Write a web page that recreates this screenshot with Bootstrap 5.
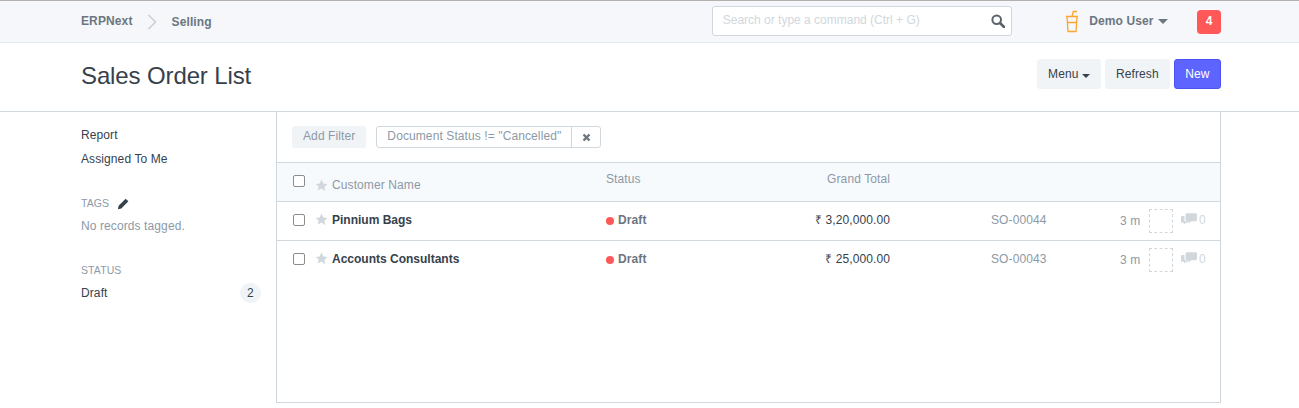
<!DOCTYPE html>
<html lang="en">
<head>
  <meta charset="UTF-8" />
  <title>Sales Order List</title>
  <link href="https://cdn.jsdelivr.net/npm/bootstrap@5.3.0/dist/css/bootstrap.min.css" rel="stylesheet" />
  <style>
    body {
      font-family: "Liberation Sans", Arial, sans-serif;
      font-size: 12px;
      line-height: 1.42857;
      letter-spacing: .1px;
      color: #36414c;
      background: #fff;
      overflow: hidden;
      height: 408px;
    }
    .wrap { width: 1140px; margin-left: 81px; }

    .topbar { height: 43px; background: #f5f7fa; border-top: 1px solid #b3b0ad; border-bottom: 1px solid #e6e9ec; }
    .topbar .wrap { height: 41px; }
    .crumb { font-weight: 700; color: #6c7680; letter-spacing: .12px; }
    .crumb-last { margin-top: 2px; }
    .crumb-sep { margin: 0 15px 0 14px; }
    .search-box { width: 301px; height: 30px; margin-left: 500px; margin-top: -1px; background: #fff; border: 1px solid #d1d8dd; border-radius: 3px; padding: 0 6px 0 10px; }
    .search-box span { color: #d1d8dd; letter-spacing: 0; }
    .user-box { margin-left: 53px; width: 132px; }
    .user-name { font-weight: 700; color: #6c7680; margin-left: 10px; }
    .caret-down { display: inline-block; border-top: 5px solid currentColor; border-left: 5px solid transparent; border-right: 5px solid transparent; }
    .user-caret { color: #6c7680; }
    .notif { width: 24px; height: 24px; margin-top: 1px; background: #ff5858; color: #fff; border-radius: 4px; font-weight: 700; }

    .page-head { height: 69px; border-bottom: 1px solid #d1d8dd; }
    .page-head h1 { font-size: 24px; font-weight: 400; margin: 0; line-height: 34px; color: #36414c; letter-spacing: -.12px; }
    .act-btn { height: 30px; padding: 0 10px; font-size: 12px; line-height: 28px; border-radius: 3px; background: #f0f4f7; border: 1px solid #f0f4f7; color: #36414c; letter-spacing: .1px; }
    .act-btn:hover { background: #f0f4f7; }
    .act-btn .caret-down { border-width: 4.5px 4.5px 0; color: #36414c; }
    .act-new { background: #5e64ff; border-color: #4c52f5; color: #fff; padding: 0 10.5px; }
    .act-new:hover { background: #5e64ff; color: #fff; border-color: #4c52f5; }

    .side { width: 195px; padding-top: 13px; padding-right: 15px; }
    .side-link { height: 24px; line-height: 20px; }
    .side-label { font-size: 10.5px; color: #8d99a6; line-height: 15px; }
    .tags-label { margin-top: 23px; }
    .tags-empty { margin-top: 7px; }
    .status-label { margin-top: 28px; }
    .status-row { margin-top: 5px; }
    .muted-txt { color: #8d99a6; }
    .count-pill { background: #f0f4f7; border-radius: 10px; width: 21px; height: 20px; }

    .list-box { width: 945px; height: 291px; border: 1px solid #d1d8dd; border-top: 0; }
    .filter-bar { height: 51px; padding: 14px 15px 0; border-bottom: 1px solid #d1d8dd; }
    .add-filter { background: #f0f4f7; border-radius: 3px; height: 22px; line-height: 20px; padding: 0 11px; color: #8d99a6; margin-right: 10px; }
    .filter-tag { height: 22px; border: 1px solid #d1d8dd; border-radius: 3px; color: #8d99a6; line-height: 18px; }
    .filter-tag > span:first-child { padding: 0 10px; border-right: 1px solid #d1d8dd; }
    .filter-tag > span:last-child { width: 28px; }

    .row-line { height: 39px; border-bottom: 1px solid #d1d8dd; padding-left: 16px; }
    .row-line:last-child { border-bottom-color: transparent; }
    .row-head { background: #f7fafc; color: #8d99a6; }
    .row-check { width: 12px; height: 12px; margin: 0 0 2px; border: 1px solid #8c8c8c; border-radius: 2px; appearance: none; background: #fff; flex: none; }
    .star-ic { margin-left: 10px; margin-right: 4px; margin-bottom: 3px; flex: none; }
    .col-name { width: 274px; font-weight: 700; color: #36414c; flex: none; letter-spacing: 0; }
    .col-status { width: 106px; font-weight: 700; color: #6c7680; flex: none; }
    .col-total { width: 178px; text-align: right; color: #36414c; flex: none; }
    .row-head .star-ic { margin-top: 6px; margin-bottom: 0; }
    .row-head .col-name { margin-top: 8px; font-weight: 400; color: #8d99a6; letter-spacing: .1px; }
    .row-head .col-status, .row-head .col-total { margin-bottom: 4px; font-weight: 400; color: #8d99a6; }
    .dot-red { width: 8px; height: 8px; border-radius: 50%; background: #ff5858; margin-right: 4px; display: inline-block; }
    .col-docname { margin-left: 101px; width: 129px; color: #8d99a6; flex: none; }
    .col-ago { color: #8d99a6; width: 29px; flex: none; margin-top: 1px; }
    .avatar-empty { width: 24px; height: 24px; border: 1px dashed #d1d8dd; flex: none; margin-right: 8px; }
    .comment-ic { margin-bottom: 2px; flex: none; }
    .comment-ct { color: #d1d8dd; margin-left: 2px; }
  </style>
</head>
<body>
  <div class="topbar">
    <div class="wrap d-flex align-items-center">
      <span class="crumb">ERPNext</span>
      <svg class="crumb-sep" width="10" height="16" viewBox="0 0 10 16"><path d="M1.500 1l7 7-7 7" fill="none" stroke="#c8ced3" stroke-width="1.500"/></svg>
      <span class="crumb crumb-last">Selling</span>
      <div class="search-box d-flex align-items-center justify-content-between">
        <span>Search or type a command (Ctrl + G)</span>
        <svg width="14" height="14" viewBox="0 0 14 14"><circle cx="5.700" cy="5.700" r="4.300" fill="none" stroke="#58636e" stroke-width="2"/><path d="M9 9l4 4" stroke="#58636e" stroke-width="2.600" stroke-linecap="round"/></svg>
      </div>
      <div class="user-box d-flex align-items-center">
        <svg width="14" height="23" viewBox="0 0 14 23"><path d="M1 6.500h12M2 6.500l1 15h8l1-15M2.500 12.500h9" fill="none" stroke="#fca62f" stroke-width="1.300"/><path d="M7 6.500L8.300 1.500H12" fill="none" stroke="#fca62f" stroke-width="1.300"/></svg>
        <span class="user-name">Demo User</span>
        <span class="caret-down ms-1 user-caret"></span>
      </div>
      <div class="notif d-flex align-items-center justify-content-center">4</div>
    </div>
  </div>

  <div class="page-head">
    <div class="wrap d-flex justify-content-between align-items-start">
      <h1 class="mt-3">Sales Order List</h1>
      <div class="d-flex gap-1 mt-3">
        <button class="btn act-btn">Menu <span class="caret-down"></span></button>
        <button class="btn act-btn">Refresh</button>
        <button class="btn act-btn act-new">New</button>
      </div>
    </div>
  </div>

  <div class="wrap d-flex">
    <div class="side">
      <div class="side-link">Report</div>
      <div class="side-link">Assigned To Me</div>
      <div class="side-label tags-label d-flex align-items-center">TAGS
        <svg class="ms-2" width="13" height="13" viewBox="0 0 12 12"><path d="M.8 11.200l.7-3.200L8 1.500l2.500 2.500L4 10.500z" fill="#36414c"/></svg>
      </div>
      <div class="muted-txt tags-empty">No records tagged.</div>
      <div class="side-label status-label">STATUS</div>
      <div class="status-row d-flex justify-content-between align-items-center">
        <span>Draft</span>
        <span class="count-pill d-flex align-items-center justify-content-center">2</span>
      </div>
    </div>

    <div class="list-box">
      <div class="filter-bar d-flex align-items-start">
        <span class="add-filter">Add Filter</span>
        <div class="filter-tag d-flex">
          <span>Document Status != "Cancelled"</span>
          <span class="d-flex align-items-center justify-content-center">
            <svg width="9" height="9" viewBox="0 0 9 9"><path d="M1.500 1.500l6 6M7.500 1.500l-6 6" stroke="#6c7680" stroke-width="2.400"/></svg>
          </span>
        </div>
      </div>

      <div class="row-line row-head d-flex align-items-center">
        <input class="row-check" type="checkbox" />
        <svg class="star-ic" width="13" height="13" viewBox="0 0 12 12"><path d="M6 .5l1.700 3.600 3.900.5-2.900 2.700.8 3.900L6 8.800l-3.500 1.900.8-3.900L.4 4.600l3.900-.5z" fill="#d1d8dd"/></svg>
        <span class="col-name">Customer Name</span>
        <span class="col-status">Status</span>
        <span class="col-total">Grand Total</span>
      </div>

      <div class="row-line d-flex align-items-center">
        <input class="row-check" type="checkbox" />
        <svg class="star-ic" width="13" height="13" viewBox="0 0 12 12"><path d="M6 .5l1.700 3.600 3.900.5-2.900 2.700.8 3.900L6 8.800l-3.500 1.900.8-3.900L.4 4.600l3.900-.5z" fill="#d1d8dd"/></svg>
        <span class="col-name">Pinnium Bags</span>
        <span class="col-status d-flex align-items-center"><i class="dot-red"></i>Draft</span>
        <span class="col-total">₹ 3,20,000.00</span>
        <span class="col-docname">SO-00044</span>
        <span class="col-ago">3 m</span>
        <span class="avatar-empty"></span>
        <svg class="comment-ic" width="16" height="14" viewBox="0 0 14 12"><path d="M5 0h8a1 1 0 0 1 1 1v5a1 1 0 0 1-1 1H9L6.500 9V7H5a1 1 0 0 1-1-1V1a1 1 0 0 1 1-1z" fill="#d1d8dd"/><path d="M1 2.500h2V7h3v1.500H4.500L2.500 10V8.500H1a1 1 0 0 1-1-1v-4a1 1 0 0 1 1-1z" fill="#d1d8dd"/></svg>
        <span class="comment-ct">0</span>
      </div>

      <div class="row-line d-flex align-items-center">
        <input class="row-check" type="checkbox" />
        <svg class="star-ic" width="13" height="13" viewBox="0 0 12 12"><path d="M6 .5l1.700 3.600 3.900.5-2.900 2.700.8 3.900L6 8.800l-3.500 1.900.8-3.900L.4 4.600l3.900-.5z" fill="#d1d8dd"/></svg>
        <span class="col-name">Accounts Consultants</span>
        <span class="col-status d-flex align-items-center"><i class="dot-red"></i>Draft</span>
        <span class="col-total">₹ 25,000.00</span>
        <span class="col-docname">SO-00043</span>
        <span class="col-ago">3 m</span>
        <span class="avatar-empty"></span>
        <svg class="comment-ic" width="16" height="14" viewBox="0 0 14 12"><path d="M5 0h8a1 1 0 0 1 1 1v5a1 1 0 0 1-1 1H9L6.500 9V7H5a1 1 0 0 1-1-1V1a1 1 0 0 1 1-1z" fill="#d1d8dd"/><path d="M1 2.500h2V7h3v1.500H4.500L2.500 10V8.500H1a1 1 0 0 1-1-1v-4a1 1 0 0 1 1-1z" fill="#d1d8dd"/></svg>
        <span class="comment-ct">0</span>
      </div>
    </div>
  </div>

  <script src="https://cdn.jsdelivr.net/npm/bootstrap@5.3.0/dist/js/bootstrap.bundle.min.js"></script>
</body>
</html>
